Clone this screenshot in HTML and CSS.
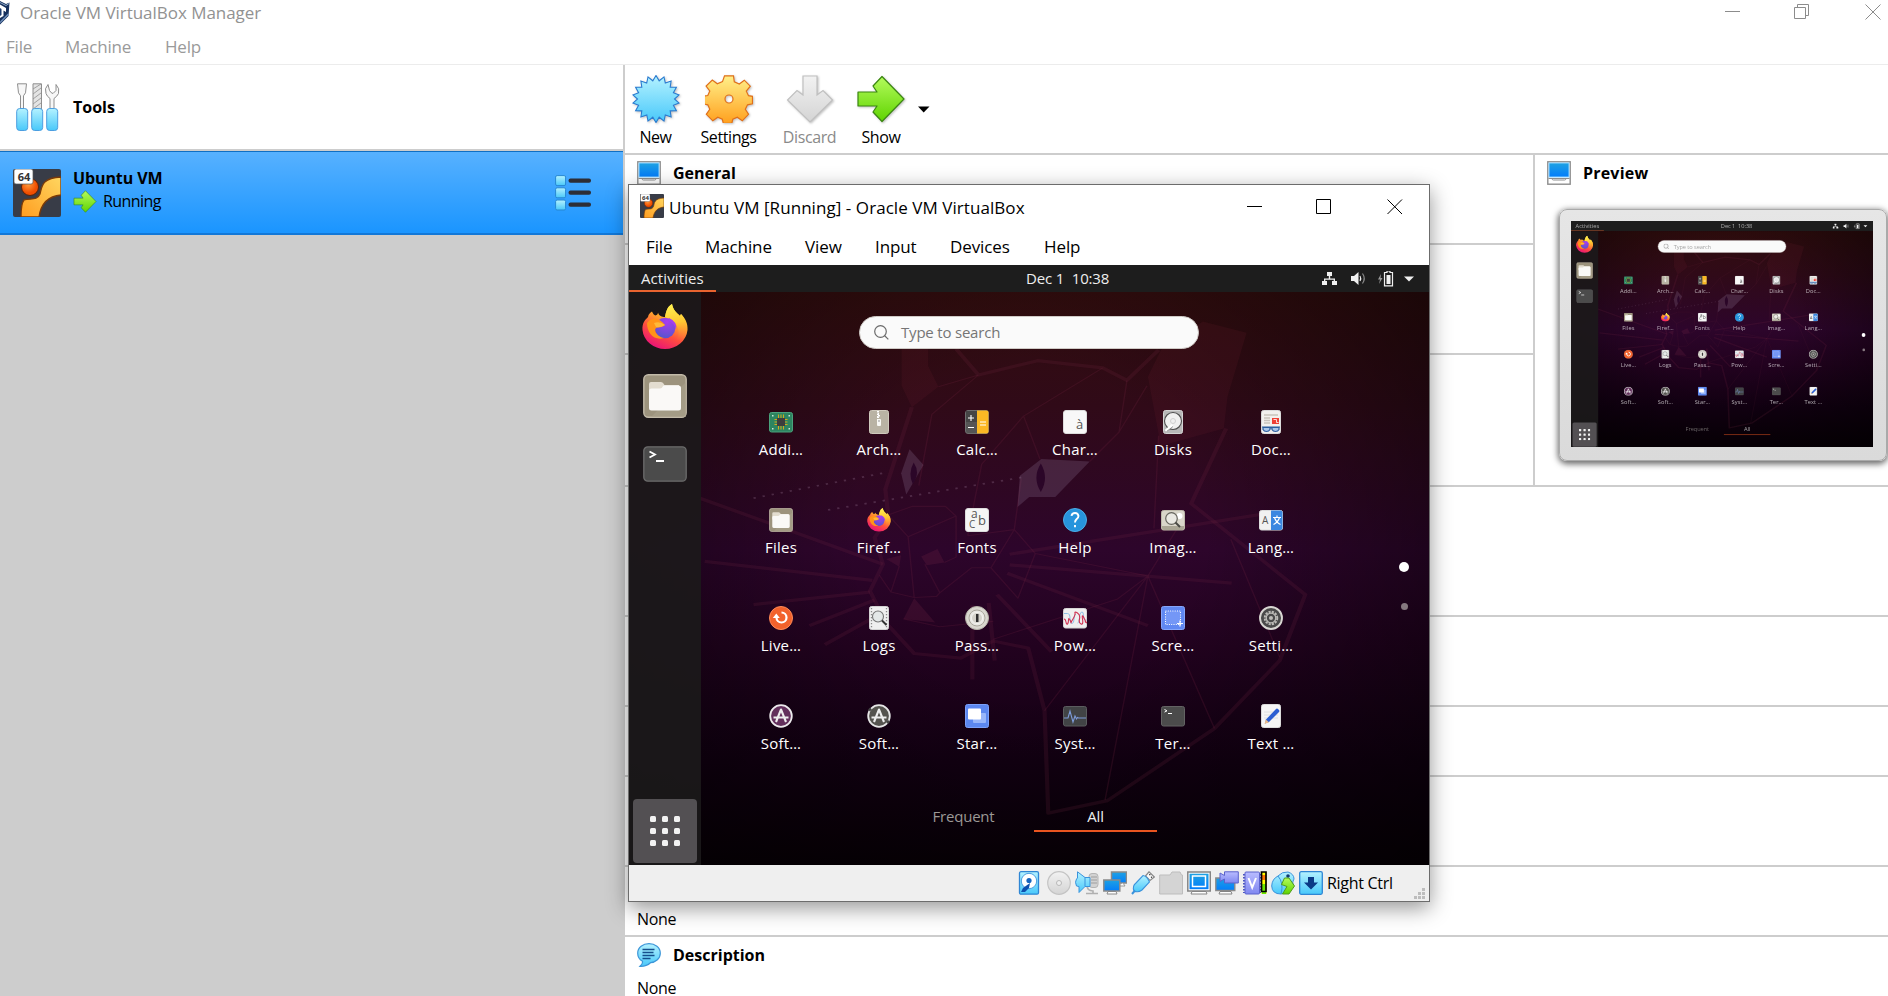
FILE: index.html
```html
<!DOCTYPE html>
<html lang="en">
<head>
<meta charset="utf-8">
<title>Oracle VM VirtualBox Manager</title>
<link rel="stylesheet" href="styles.css">
</head>
<body>
<svg class="defs" width="0" height="0" aria-hidden="true">
  <defs>
    <linearGradient id="cyan" x2="0" y2="1"><stop stop-color="#b4f2ff"/><stop offset="1" stop-color="#48c8fa"/></linearGradient>
    <linearGradient id="screenblue" x2="0" y2="1"><stop stop-color="#1fa2e2"/><stop offset="1" stop-color="#037dfb"/></linearGradient>
    <linearGradient id="gold" x2="0" y2="1"><stop stop-color="#fff08a"/><stop offset="1" stop-color="#ffa01e"/></linearGradient>
    <linearGradient id="green" x2="0" y2="1"><stop stop-color="#b4fb5c"/><stop offset="1" stop-color="#5fd400"/></linearGradient>
    <linearGradient id="silver" x2="0" y2="1"><stop stop-color="#f2f2f2"/><stop offset="1" stop-color="#d4d4d4"/></linearGradient>
    <linearGradient id="violet" x2="0" y2="1"><stop stop-color="#b9bcff"/><stop offset="1" stop-color="#8088f0"/></linearGradient>
    <linearGradient id="orangeband" x1="1" y1="0" x2="0" y2="1"><stop stop-color="#ffd660"/><stop offset="1" stop-color="#ff9d20"/></linearGradient>
    <radialGradient id="ball" cx=".4" cy=".35"><stop stop-color="#ff9a3c"/><stop offset="1" stop-color="#f04e00"/></radialGradient>
    <linearGradient id="ff" x1=".8" y1="0" x2=".3" y2="1"><stop stop-color="#fff44f"/><stop offset=".35" stop-color="#ffb02a"/><stop offset=".65" stop-color="#ff4f3d"/><stop offset="1" stop-color="#e8107a"/></linearGradient>
    <linearGradient id="fftail" x1=".5" y1="0" x2=".6" y2="1"><stop stop-color="#fff050"/><stop offset=".5" stop-color="#ffc832"/><stop offset="1" stop-color="#ff6a3a" stop-opacity="0"/></linearGradient>
    <radialGradient id="ffglobe" cx=".6" cy=".2" r=".9"><stop stop-color="#a83cf0"/><stop offset="1" stop-color="#4f57c8"/></radialGradient>

    <symbol id="i-vm" viewBox="0 0 48 48">
      <rect width="48" height="48" rx="2" fill="#383c47"/>
      <circle cx="17" cy="18" r="8.500" fill="url(#ball)" stroke="#5a2208"/>
      <path d="M8 48C8 41 8.500 34 11 31C18 29 24 32 27 25C29 18 28 9 48 8V26C36 27 28 34 26 48Z" fill="url(#orangeband)" stroke="#7a3a08" stroke-width="1.300"/>
      <rect x="1" y="0" width="19" height="15" rx="2" fill="#fff" stroke="#555" stroke-width=".7"/>
    </symbol>
    <symbol id="i-display" viewBox="0 0 24 24">
      <rect x=".8" y=".8" width="22.400" height="22.400" fill="#fff" stroke="#8d8d8d" stroke-width="1.400"/>
      <rect x="2" y="2" width="20" height="14" fill="url(#screenblue)" stroke="#8fd4ff" stroke-width="1"/>
      <path d="M1.500 17.500h21M5 17.500q0 1.500 1.500 1.500h11q1.500 0 1.500-1.500" fill="none" stroke="#8d8d8d" stroke-width="1"/>
    </symbol>
    <symbol id="i-arrow" viewBox="0 0 48 48">
      <path d="M1 17H20L16 11L25 1.500L47 24L25 46.500L16 37L20 31H1Z" fill="url(#green)" stroke="#3a8610" stroke-width="1.200" stroke-linejoin="round"/>
    </symbol>
    <symbol id="i-firefox" viewBox="0 0 46 46">
      <path d="M10 7.500C11 10 12 11 13.500 11.500C15 11 16 10 16 8.500C17 12 20 13 23 13C24 8 25 3 30 0C31 6 35 9 38 12L39 10C43 14 46 19 45.500 26A22.600 21 0 0 1 .5 26C0 19 3 16 6 13C6.500 10 8 9 10 7.500Z" fill="url(#ff)"/>
      <path d="M30 0C31 6 35 9 38 12L39 10C44 16 47 24 43 32C40 38 36 37 34 36C40 29 36 17 23 13C24 8 25 3 30 0Z" fill="url(#fftail)"/>
      <circle cx="23" cy="24" r="10.300" fill="url(#ffglobe)"/>
      <path d="M5 19C9 13 17 13 23 21C20 24 16 23 14 24C11 27 16 33 22 34C12 37 5 29 5 19Z" fill="#ff9418"/>
      <path d="M12 19q6-2 11 2q-5 3-9 2z" fill="#ffb938"/>
      <path d="M27 14q9 4 7 12q-1-6-7-9z" fill="#a23ff0"/>
    </symbol>
    <symbol id="i-files" viewBox="0 0 44 44">
      <rect x=".8" y=".8" width="42.400" height="42.400" rx="4.500" fill="#9c937d" stroke="#c2baa8" stroke-width="1.400"/>
      <path d="M43 8V43H8z" fill="#aaa18c" opacity=".6"/>
      <path d="M6 10q0-2 2-2h10q2 0 3.500 3H36v10H6z" fill="#e3ddd0"/>
      <path d="M6 17q0-2.500 2.500-2.500H17q2 0 3.500-3H35.500q2.500 0 2.500 2.500V34q0 2.500-2.500 2.500h-27Q6 36.500 6 34z" fill="#faf9f7"/>
    </symbol>
    <symbol id="i-terminal" viewBox="0 0 44 36">
      <rect x=".8" y=".8" width="42.400" height="34.400" rx="4" fill="#4b4b4b" stroke="#6b6b6b" stroke-width="1.300"/>
      <path d="M6.500 5.500l5.500 3-5.500 3M13 15h8" fill="none" stroke="#fff" stroke-width="1.800"/>
    </symbol>
  </defs>
</svg>

<div class="manager">
  <header class="titlebar">
    <svg class="app-logo" width="10" height="24" viewBox="0 0 10 24"><path d="M0 0L6 3L9.500 1.500L8.500 15L0 23.500Z" fill="#16305c"/><path d="M0 3.500L6 7V11L3.500 9.500V15L0 17Z" fill="#fff"/><path d="M0 7L1.500 8V14L0 15Z" fill="#1c3c70"/><path d="M0 1.500L6 4.500L9 2.500" fill="none" stroke="#8fa9c8"/><path d="M8.500 13L0 21.500" stroke="#7090bb" stroke-width="1.500"/></svg>
    <span class="titlebar-text">Oracle VM VirtualBox Manager</span>
    <svg class="controls-outer" width="156" height="16" viewBox="0 0 156 16" fill="none" stroke="#8c8c8c"><path d="M0 7.500h15M69.500 3.500h11v11h-11zM72.500 3V.5h11v11H81"/><path d="M140.500.5l15 15M155.500.5l-15 15"/></svg>
  </header>
  <nav class="menubar"><span class="m-file">File</span><span class="m-machine">Machine</span><span>Help</span></nav>

  <div class="body">
    <aside class="sidebar">
      <div class="tools-row">
        <svg class="tools-icon" width="44" height="48" viewBox="0 0 44 48" stroke="#8e8e8e" fill="#f7f7f7">
          <path d="M1.500.8h9l-1 9-2 3v13h-3v-13l-2-3z"/>
          <path d="M17 .8h8.500V26H17z" fill="#e4e4e4"/><path d="M17 6l8-5M17 11l8-6M17 16l8-6M17 21l8-6M17 26l8-6" stroke-width=".8"/>
          <path d="M32 1.500q-4 4-2 9 1 3 4 5V26h4V15.500q3-2 4.500-5 1.500-5-2.500-9v6l-3 3q-2-.3-3.500-3z"/>
          <g fill="url(#cyan)" stroke="#4c9ee0"><rect x=".7" y="25.500" width="11" height="22" rx="3"/><rect x="15.700" y="25.500" width="11" height="22" rx="3"/><rect x="30.700" y="25.500" width="11" height="22" rx="3"/></g>
        </svg>
        <b>Tools</b>
      </div>
      <div class="vm-row">
        <div class="vm-icon"><svg width="48" height="48"><use href="#i-vm"/></svg><span>64</span></div>
        <div class="vm-info">
          <b>Ubuntu VM</b>
          <div class="vm-state"><svg width="24" height="23"><use href="#i-arrow" width="24" height="23"/></svg><span>Running</span></div>
        </div>
        <svg class="vm-list" width="36" height="36" viewBox="0 0 36 36"><g fill="url(#cyan)" stroke="#2787d2"><rect x=".6" y=".6" width="10" height="10" rx="1.500"/><rect x=".6" y="12.800" width="10" height="10" rx="1.500"/><rect x=".6" y="25" width="10" height="10" rx="1.500"/></g><g fill="#2d2d35"><rect x="13.500" y="3.500" width="22.500" height="4.300" rx="2"/><rect x="13.500" y="15.500" width="22.500" height="4.300" rx="2"/><rect x="13.500" y="27.500" width="22.500" height="4.300" rx="2"/></g></svg>
      </div>
    </aside>

    <main class="details">
      <div class="toolbar">
        <div class="tool t-new">
          <svg width="48" height="48" viewBox="0 0 48 48"><path id="burst" fill="url(#cyan)" stroke="#2a7bd0" stroke-width="1.100" d=""/></svg>
          <span>New</span></div>
        <div class="tool t-settings">
          <svg width="48" height="48" viewBox="0 0 48 48"><path d="M19.500.8h9l.8 6 5 2.200 5-3.800 6 6-4 5 2.200 4.500 4 .600v7.500l-5 1-2.200 4.500 3.200 5-6.200 6.500-5-3.500-4.500 2-1 4h-8.500l-1-4-4.500-2-5 3.500-6.500-6.500 3.500-5-2-4.500-5-1v-7.500l5-.8 2-4.500-3.700-5 6.200-6 5 3.800 5.200-2.200zM24 20a4 4 0 1 0 0 8 4 4 0 0 0 0-8z" fill="url(#gold)" stroke="#e0701a" stroke-width="1.200" fill-rule="evenodd"/></svg>
          <span>Settings</span></div>
        <div class="tool t-discard">
          <svg width="48" height="48" viewBox="0 0 48 48"><path d="M17 1H31V20L37 15.500L46.500 25L24 47L1.500 25L11 15.500L17 20Z" fill="url(#silver)" stroke="#c0c0c0" stroke-width="1.200"/></svg>
          <span>Discard</span></div>
        <div class="tool t-show">
          <svg width="48" height="48"><use href="#i-arrow"/></svg>
          <span>Show</span></div>
        <svg class="caret" width="12" height="7" viewBox="0 0 12 7"><path d="M0 .5h11.500L5.700 6.500z"/></svg>
      </div>

      <div class="upper">
        <div class="upper-left">
          <section class="sec h90"><h2><svg width="24" height="24"><use href="#i-display"/></svg>General</h2></section>
          <section class="sec h110"></section>
          <section class="sec h132"></section>
        </div>
        <section class="preview">
          <h2><svg width="24" height="24"><use href="#i-display"/></svg>Preview</h2>
          <div class="monitor"><div class="monitor-screen" id="thumb"></div></div>
        </section>
      </div>
      <section class="sec h130"></section>
      <section class="sec h90"></section>
      <section class="sec h70"></section>
      <section class="sec h90"></section>
      <section class="sec h70 usb"><p>None</p></section>
      <section class="sec desc">
        <h2><svg width="24" height="24" viewBox="0 0 24 24"><path d="M12 .7C18 .7 23.300 4.500 23.300 10.200S18 19.500 13.500 19.700C11 22 7 23.500 3 23.300C5 21.500 5.800 20 5.500 18.300C2.500 16.500.7 13.800.7 10.200C.7 4.500 6 .7 12 .7Z" fill="url(#cyan)" stroke="#3c96d8" stroke-width="1.200"/><path d="M5.500 6.500h12M5.500 9.500h11M5.500 12.500h12M5.500 15.500h8" stroke="#154f8c" stroke-width="1.700"/></svg>Description</h2>
        <p>None</p>
      </section>
    </main>
  </div>
</div>

<div class="vmwin">
  <header class="win-title">
    <div class="vm-icon small"><svg width="24" height="24"><use href="#i-vm"/></svg><span>64</span></div>
    <span class="win-name">Ubuntu VM [Running] - Oracle VM VirtualBox</span>
    <svg class="controls-inner" width="156" height="16" viewBox="0 0 156 16" fill="none" stroke="#000"><path d="M0 7.500h15M69.500.5h14v14h-14z"/><path d="M140.500.5l14.500 14.500M155 .5l-14.500 14.500"/></svg>
  </header>
  <nav class="win-menu"><span class="w1">File</span><span class="w2">Machine</span><span class="w3">View</span><span class="w4">Input</span><span class="w5">Devices</span><span>Help</span></nav>

  <div class="guest" id="guest">
    <div class="topbar">
      <span class="activities">Activities</span>
      <span class="clock">Dec 1&nbsp; 10:38</span>
      <svg class="tray" width="94" height="16" viewBox="0 0 94 16" fill="#f0f0f0">
        <path d="M5 1h5v4H8.200v2.500H13v2.500h2v4h-5v-4h1.700V8.800H3.300V10H5v4H0v-4h2V7.500h4.800V5H5z"/>
        <path d="M29 5h3l4.500-4v13L32 10h-3z"/><path d="M38 5q1.500 2.500 0 5" fill="none" stroke="#f0f0f0" stroke-width="1.100"/><path d="M40.500 2.500q3.500 5 0 10" fill="none" stroke="#8a8a8a" stroke-width="1.200"/>
        <path d="M59 3l-3 5.500h2l-1 4.500 3.500-6h-2z" fill="#9a9a9a"/><path d="M63 1.500h2V0h3v1.500h2.500v13.300H62.500V1.500z" fill="none" stroke="#f0f0f0" stroke-width="1.200"/><path d="M64.500 4h4v9h-4z"/>
        <path d="M82 5.500h10l-5 5z"/>
      </svg>
    </div>
    <div class="shell">
      <svg class="wall" width="800" height="573" viewBox="0 27 800 573">
        <g transform="translate(71 35) scale(.4656 .3571)" fill="none" stroke-linejoin="round">
          <g stroke="#7c2848" stroke-opacity=".17" stroke-width="9">
            <path d="M455 300L398 530L405 610L375 665L393 740L365 815L400 905L460 990L560 1003L630 955L705 975L740 1150L748 1437L875 1402L1105 1200L1245 1010L1300 825L1055 570L1130 360"/>
            <path d="M550 137L598 210L725 170L865 190L917 225L985 140"/>
            <path d="M0 555L393 740M10 732L370 785M115 853L365 818M235 912L375 840M268 965L400 870M665 712L1230 595M665 742L1142 793M660 765L962 912M638 825L755 985M620 848L633 1010M585 855V1063"/>
          </g>
          <g stroke="#7c2848" stroke-opacity=".2" stroke-width="3">
            <path d="M598 210L512 243M598 210L498 320L470 520M865 190L695 325L730 445M695 325L605 460L575 660M917 225L900 370L837 452M960 240L900 370M985 380L975 640M398 605L455 578H527L550 605M410 610L447 663L460 833M447 663L550 605M575 660L675 643L690 500M675 643L625 750L683 835L720 710L675 643M625 750H583L515 820L483 740M515 820L508 830L460 833L410 818L428 745M385 770L410 818M720 710L962 773L897 837L630 950M962 773L740 1150M962 773L870 1400M962 773L1105 1200M1025 640L962 773M1140 670L1245 1000M437 893L515 915L630 900M525 735L550 720V605"/>
          </g>
          <g fill="#802838" fill-opacity=".12"><path d="M433 100H490V185L512 243L455 300L433 240Z"/><path d="M990 140L1080 60L1174 92L1133 270L1125 360L985 410V375L962 215Z"/></g>
          <g fill="#7c2848" fill-opacity=".22"><path d="M460 835L505 903L437 893Z"/><path d="M475 718L510 697L525 735L487 743ZM400 725L432 715L428 747Z"/></g>
          <g fill="#8a6e90" fill-opacity=".27"><path d="M450 418L480 462L443 545L432 485Z"/><path d="M733 445L837 452L763 552H707L682 580L687 492Z"/></g>
          <path d="M459 455Q474 485 457 515Q446 485 459 455ZM732 458Q750 498 732 538Q713 498 732 458Z" fill="#2b0628"/>
          <path d="M115 555L400 483M275 588L690 497" stroke="#9a7a98" stroke-opacity=".3" stroke-width="5" stroke-dasharray="5 15"/>
        </g>
      </svg>
      <div class="dock">
        <svg width="46" height="46"><use href="#i-firefox"/></svg>
        <svg class="d-files" width="44" height="44"><use href="#i-files"/></svg>
        <svg class="d-term" width="44" height="36"><use href="#i-terminal"/></svg>
        <div class="apps-btn"><svg width="30" height="30" viewBox="0 0 30 30" fill="#f2f2f2"><rect width="6" height="6" rx="1.500"/><rect x="12" width="6" height="6" rx="1.500"/><rect x="24" width="6" height="6" rx="1.500"/><rect y="12" width="6" height="6" rx="1.500"/><rect x="12" y="12" width="6" height="6" rx="1.500"/><rect x="24" y="12" width="6" height="6" rx="1.500"/><rect y="24" width="6" height="6" rx="1.500"/><rect x="12" y="24" width="6" height="6" rx="1.500"/><rect x="24" y="24" width="6" height="6" rx="1.500"/></svg></div>
      </div>
      <div class="overview">
        <div class="search"><svg width="15" height="15" viewBox="0 0 15 15" fill="none" stroke="#6a6a6a" stroke-width="1.200"><circle cx="6.500" cy="6.500" r="5.800"/><path d="M10.500 10.500l3.800 3.800"/></svg><span>Type to search</span></div>
        <div class="grid">
          <div class="app"><svg viewBox="0 0 24 24"><rect x=".5" y="2.500" width="23" height="19.500" rx="2" fill="#2d8560" stroke="#4aa27c"/><path d="M9.500 4.500v15M12 4.500v15M14.500 4.500v15M5.500 9.500h13M5.500 12h13M5.500 14.500h13" stroke="#d4a61c" stroke-width="1"/><rect x="8" y="8" width="8" height="8" fill="#3d3d3d"/><path d="M3 5h1.500v1.500H3zM19.500 5H21v1.500h-1.500zM3 18h1.500v1.500H3zM19.500 18H21v1.500h-1.500z" fill="#c9e8da"/></svg><span>Addi…</span></div>
          <div class="app"><svg viewBox="0 0 24 24"><rect x="2.500" y=".5" width="19" height="23" rx="2" fill="#b9b3a4" stroke="#cfcabd"/><path d="M11 1v3h1v3h-1v3" stroke="#fff" stroke-width="2" stroke-dasharray="1.500 1" fill="none"/><rect x="10" y="9" width="4" height="7" rx="1" fill="#f8f8f4"/><path d="M11 11h2" stroke="#999"/></svg><span>Arch…</span></div>
          <div class="app"><svg viewBox="0 0 24 24"><rect x=".5" y=".5" width="23" height="23" rx="2.500" fill="#555" stroke="#6e6e6e"/><path d="M1 1h11v11H1z" fill="#454545"/><path d="M12 .5h9.500q2 0 2 2v19q0 2-2 2H12z" fill="#fbb824"/><path d="M3 8h6M6 5v6M3 17.500h6M15 12h6M15 15h6" stroke="#fff" stroke-width="1.100"/></svg><span>Calc…</span></div>
          <div class="app"><svg viewBox="0 0 24 24"><rect x=".5" y=".5" width="23" height="23" rx="2.500" fill="#f8f8f8" stroke="#dcdcdc"/></svg><i class="glyph g-char">à</i><span>Char…</span></div>
          <div class="app"><svg viewBox="0 0 24 24"><rect x="2.500" y=".5" width="19" height="23" rx="2" fill="#b8b8b8" stroke="#d4d4d4"/><circle cx="12" cy="11" r="8.500" fill="#f0f0f0" stroke="#4c4c4c" stroke-width="1.100"/><circle cx="12" cy="11" r="2.500" fill="none" stroke="#d0d0d0"/><path d="M4.500 21l7-6" stroke="#fff" stroke-width="2.500"/><path d="M5.500 21.500l6.500-5" stroke="#777" stroke-width=".7"/></svg><span>Disks</span></div>
          <div class="app"><svg viewBox="0 0 24 24"><rect x="2.500" y=".5" width="19" height="23" rx="2" fill="#f2f0ee" stroke="#dadada"/><path d="M5 5h14M5 8h6M5 10.500h6M5 13h6" stroke="#c9c3bc" stroke-width="1.300"/><path d="M13 8h7v6h-7z" fill="#ee4035"/><path d="M14.500 9.500h3v3h2" stroke="#fff" fill="none" stroke-width=".8"/><path d="M4 17.500h7v2q-1 2-3.500 2T4 19.500zM13 17.500h7v2q-1 2-3.500 2T13 19.500zM11 18h2M3 17h18" fill="#a9c6ea" stroke="#2d5f9e" stroke-width="1.200"/></svg><span>Doc…</span></div>

          <div class="app"><svg><use href="#i-files" width="24" height="24"/></svg><span>Files</span></div>
          <div class="app"><svg><use href="#i-firefox" width="24" height="24"/></svg><span>Firef…</span></div>
          <div class="app"><svg viewBox="0 0 24 24"><rect x=".5" y=".5" width="23" height="23" rx="2.500" fill="#f5f5f5" stroke="#dcdcdc"/></svg><i class="glyph g-fa">a</i><i class="glyph g-fb">b</i><i class="glyph g-fc">C</i><span>Fonts</span></div>
          <div class="app"><svg viewBox="0 0 24 24"><circle cx="12" cy="12" r="11.500" fill="#2794dc" stroke="#4aaee8"/><path d="M8.500 7.800q.5-2.800 3.500-2.800t3.500 3q0 1.700-2 3.200-1.500 1.300-1.500 3.300M12 17v2.200" fill="none" stroke="#fff" stroke-width="1.900"/></svg><span>Help</span></div>
          <div class="app"><svg viewBox="0 0 24 24"><rect x=".5" y="2.500" width="23" height="19.500" rx="2" fill="#d9d6ca" stroke="#bdb9aa"/><path d="M1 18h22v2q0 2-2 2H3q-2 0-2-2z" fill="#aaa695"/><circle cx="18.500" cy="8" r="3" fill="#fff"/><circle cx="10.500" cy="10.500" r="5.800" fill="#e9e8e2" stroke="#66655e" stroke-width="1.200"/><path d="M14.500 14.500l4.500 4.500" stroke="#4a4a45" stroke-width="1.900"/></svg><span>Imag…</span></div>
          <div class="app"><svg viewBox="0 0 24 24"><rect x=".5" y="2.500" width="23" height="19.500" rx="2" fill="#f1f1f1" stroke="#ddd"/><path d="M12 2.500h9.500q2 0 2 2v15.500q0 2-2 2H12z" fill="#3a87e0"/><path d="M14 9.500h8M18 7.500v2M15.500 9.500q1.500 5 6 7M20.500 9.500q-1.500 5-6 7" stroke="#fff" fill="none" stroke-width="1.200"/></svg><i class="glyph g-lang">A</i><span>Lang…</span></div>

          <div class="app"><svg viewBox="0 0 24 24"><circle cx="12" cy="12" r="11.500" fill="#f2622c" stroke="#ff8a58"/><path d="M7.500 11.500a5 5 0 1 0 5-5" fill="none" stroke="#fff" stroke-width="2.200"/><path d="M3.800 12h7L7.300 7.500z" fill="#fff"/></svg><span>Live…</span></div>
          <div class="app"><svg viewBox="0 0 24 24"><rect x="2.500" y=".5" width="19" height="23" rx="2" fill="#efefef" stroke="#d2d2d2"/><path d="M4.500 2v20M19.500 2v20" stroke="#8a8a8a" stroke-width="1.300" stroke-dasharray="1.300 1.700"/><circle cx="11" cy="10.500" r="5.500" fill="#e4e8e8" stroke="#777" stroke-width="1.100"/><path d="M15 14.500l4.500 4.500" stroke="#333" stroke-width="1.900"/></svg><span>Logs</span></div>
          <div class="app"><svg viewBox="0 0 24 24"><circle cx="12" cy="12" r="11.500" fill="#d9d7cf" stroke="#b5b2a8"/><circle cx="12" cy="12" r="8" fill="#e9e8e3" stroke="#aaa79c"/><circle cx="12" cy="12" r="5.500" fill="#d4d2ca" stroke="#f5f5f2"/><path d="M11 8h2.500v8H11z" fill="#2e2e2e"/></svg><span>Pass…</span></div>
          <div class="app"><svg viewBox="0 0 24 24"><rect x=".5" y="2.500" width="23" height="19.500" rx="2" fill="#efefef" stroke="#d5d5d5"/><path d="M1 7.500h3.500q2.500 0 2.500 5t2 5 2-4.500 2-5M14.500 17q2 0 2-5t2-6 2 4 3 4" fill="none" stroke="#8fc0e6"/><path d="M1 13q1.500 0 2 3t1.500 2 1-4 1.500 0 1 3 2-4 2-6 2.500 0 2 6 1.500 5 1.500-5 1.500-1 1.500 4 1.500 1" fill="none" stroke="#d03050" stroke-width="1.100"/></svg><span>Pow…</span></div>
          <div class="app"><svg viewBox="0 0 24 24"><rect x=".5" y=".5" width="23" height="23" rx="2" fill="#6088f2" stroke="#84a5fa"/><rect x="4.500" y="5" width="15" height="13.500" fill="#7497f6" stroke="#fff" stroke-width="1.100" stroke-dasharray="1 1.300"/><path d="M19 14.500v6M16 17.500h6" stroke="#fff" stroke-width="1.200"/></svg><span>Scre…</span></div>
          <div class="app"><svg viewBox="0 0 24 24"><circle cx="12" cy="12" r="11" fill="#4a4a4a" stroke="#d8d6d2" stroke-width="1.900"/><circle cx="12" cy="12" r="6.300" fill="none" stroke="#bdbcb8" stroke-width="1.900" stroke-dasharray="2.200 1.100"/><circle cx="12" cy="12" r="4.800" fill="none" stroke="#bdbcb8" stroke-width="1.300"/><circle cx="12" cy="12" r="2" fill="#bdbcb8"/></svg><span>Setti…</span></div>

          <div class="app"><svg viewBox="0 0 24 24"><circle cx="12" cy="12" r="10.800" fill="#63305c" stroke="#eceaec" stroke-width="1.800"/><path d="M7 18L12 5.500L17 18M4.500 13.500h15" fill="none" stroke="#eee" stroke-width="2.100" stroke-linejoin="round"/></svg><span>Soft…</span></div>
          <div class="app"><svg viewBox="0 0 24 24"><circle cx="12" cy="12" r="10.800" fill="#55544f" stroke="#e6e6e6" stroke-width="1.800"/><path d="M7 18L12 5.500L17 18M4.500 13.500h15" fill="none" stroke="#eee" stroke-width="2.100" stroke-linejoin="round"/><path d="M2 6.500l2-2M20 19l2-2" stroke="#444" stroke-width="2.500"/></svg><span>Soft…</span></div>
          <div class="app"><svg viewBox="0 0 24 24"><rect x=".5" y=".5" width="23" height="23" rx="2" fill="#5c88f0" stroke="#7ba1fa"/><rect x="8" y="9" width="13" height="10" rx="1" fill="#98b6fa"/><rect x="3" y="4.500" width="13" height="11" rx="1" fill="#fff"/></svg><span>Star…</span></div>
          <div class="app"><svg viewBox="0 0 24 24"><rect x=".5" y="2.500" width="23" height="19.500" rx="2" fill="#414345" stroke="#5b5d5f"/><path d="M1 14h4l2-7 3 11 2-6 1.500 3 1-1.500 1 .500H23" fill="none" stroke="#7d9ad8" stroke-width="1.100"/></svg><span>Syst…</span></div>
          <div class="app"><svg viewBox="0 0 24 24"><rect x=".5" y="2.500" width="23" height="19.500" rx="2" fill="#4b4b4b" stroke="#636363"/><path d="M3.500 5.500l2.500 1.300-2.500 1.300M7 9.500h4" fill="none" stroke="#fff"/></svg><span>Ter…</span></div>
          <div class="app"><svg viewBox="0 0 24 24"><rect x="2.500" y=".5" width="19" height="23" rx="2" fill="#f5f5f5" stroke="#dadada"/><path d="M5 8h14M5 11h14M5 14h14" stroke="#e0e0e0"/><path d="M6 19.500l1-4 10-10.500q1-1 2.500.500t.500 2.500L10 18z" fill="#2c5fd2"/><path d="M5.500 20l1.300-4.500 3.200 2.700z" fill="#e9b98a"/></svg><span>Text …</span></div>
        </div>
        <div class="tabs"><span class="tab">Frequent</span><span class="tab active">All</span></div>
        <div class="pages"><i class="on"></i><i></i></div>
      </div>
    </div>
  </div>

  <footer class="status">
    <svg class="hdd" viewBox="0 0 24 24"><rect x="2.500" y=".7" width="19" height="22.500" rx="1.500" fill="url(#cyan)" stroke="#2f86d4" stroke-width="1.300"/><circle cx="12" cy="10" r="7.700" fill="#fff" stroke="#4a9ee0"/><circle cx="12" cy="9.500" r="2.600" fill="#1765c0"/><path d="M4 21l2-4 7-5-1 5-4 4z" fill="#0d4fae"/></svg>
    <svg viewBox="0 0 24 24"><circle cx="12" cy="12" r="11.300" fill="url(#silver)" stroke="#c4c4c4" stroke-width="1.200"/><circle cx="12" cy="12" r="2.500" fill="#eee" stroke="#b8b8b8"/></svg>
    <svg viewBox="0 0 24 24"><rect x="14" y="2.500" width="9" height="14" rx="3" fill="#d2d2d2" stroke="#b4b4b4"/><path d="M16 6h6M16 9h6M16 12h6M12 14q0 6 6 6v3M11 22.500h12" fill="none" stroke="#b0b0b0" stroke-width="1.600"/><path d="M1.500 8Q-.5 11 1.500 15L4 15.500V21.500L10 15.500H15V6.500H10L2.500 .8V7Z" fill="url(#cyan)" stroke="#3a93dc"/><path d="M10 6.500v9" stroke="#3a93dc"/></svg>
    <svg viewBox="0 0 24 24"><path d="M8.500 1h15v11h-15z" fill="url(#screenblue)" stroke="#8a8a8a" stroke-width="1.500"/><path d="M17 15h5l-2-3" fill="#fff" stroke="#999"/><path d="M.8 9h16v11H.8z" fill="url(#screenblue)" stroke="#8a8a8a" stroke-width="1.500"/><path d="M4 23h10l-1-2.500H5z" fill="#fff" stroke="#8a8a8a"/></svg>
    <svg viewBox="0 0 24 24"><path d="M14.500 5L18 .8L23.300 6L19 9.500Z" fill="#fafafa" stroke="#888" stroke-width="1.200"/><path d="M18 3.700h1.500M20.500 5.500v1.500" stroke="#555" stroke-width="1.200"/><path d="M3 20Q1 15 5 12L12 4.500Q16 5 18.500 11L11 19Q7 22 3 20Z" fill="url(#cyan)" stroke="#3a93dc" stroke-width="1.100"/><path d="M4 19.500L1 23" stroke="#3a93dc" stroke-width="2"/></svg>
    <svg viewBox="0 0 24 24"><path d="M.7 23V4H11L13 1h8l1.500 3h1V23Z" fill="#d4d4d4" stroke="#bdbdbd"/></svg>
    <svg viewBox="0 0 24 24"><path d="M.8 1h22.500v19H.8z" fill="#fff" stroke="#858585" stroke-width="1.500"/><path d="M2.500 2.700h19v15.500h-19z" fill="url(#screenblue)"/><path d="M5.500 5h13v10.500h-13z" fill="none" stroke="#fff" stroke-width="1.500"/><path d="M4 23h16l-1-2.500H5z" fill="#fff" stroke="#858585"/></svg>
    <svg viewBox="0 0 24 24"><path d="M.8 7h19v12.500H.8z" fill="url(#screenblue)" stroke="#8a8a8a" stroke-width="1.400"/><path d="M4 23h13l-1-2.500H5z" fill="#fff" stroke="#858585"/><path d="M9.500.8H23.300V12H9.500V8L5 10.500V2L9.500 4.500Z" fill="url(#violet)" stroke="#5a62cc"/></svg>
    <svg viewBox="0 0 24 24"><path d="M1.500 3v19M16.500 3v19" stroke="#4c55c0" stroke-width="3" stroke-dasharray="1.500 1.500"/><rect x="2" y="1" width="14.500" height="22" rx="1" fill="url(#violet)" stroke="#5a62cc"/><path d="M5.500 7l3.700 9.500L13 7" fill="none" stroke="#fff" stroke-width="2"/><path d="M18.500 1h5v22h-5z" fill="#ff0"/><path d="M19 13h4v10h-4z" fill="#6be800"/><path d="M19 4h4v5h-4z" fill="#ff7800"/><path d="M18.500 1h4.500v19.500h-4.500z" fill="none" stroke="#000" stroke-width="1.700"/></svg>
    <svg viewBox="0 0 24 24"><path d="M7 5Q11 .5 17 1Q23 3 23 8Q21 11 22 14Q18 22 10 23Q1 23 .7 15Q1 8 7 5Z" fill="url(#cyan)" stroke="#3a93dc"/><path d="M7 5Q13 12 10 23" fill="none" stroke="#3a93dc"/><circle cx="17" cy="5" r="1.800" fill="#103a70"/><path d="M13.500 7H18L23.500 15L18 23H11.500L16 15.500L10.500 13.500Z" fill="url(#green)" stroke="#4f9c1a"/></svg>
    <svg viewBox="0 0 24 24"><rect x=".7" y=".7" width="22.600" height="22.600" rx="1.500" fill="url(#cyan)" stroke="#2f86d4" stroke-width="1.300"/><path d="M9 6h6v5.500h4L12 18.500 5 11.500h4z" fill="#0b3a86"/></svg>
    <span class="hostkey">Right Ctrl</span>
    <svg class="grip" width="12" height="12" viewBox="0 0 12 12" fill="#bdbdbd"><path d="M8 0h3v3H8zM4 4h3v3H4zM8 4h3v3H8zM0 8h3v3H0zM4 8h3v3H4zM8 8h3v3H8z"/></svg>
  </footer>
</div>
<script src="script.js"></script>
</body>
</html>
```
FILE: styles.css
```css
* { box-sizing: border-box; }
body { margin: 0; width: 1888px; height: 996px; overflow: hidden; background: #fff; color: #000; font: 16px/20px "Open Sans", "Noto Sans", sans-serif; }
svg { display: block; flex: none; }
svg.defs { position: absolute; }
h2, p { margin: 0; }
span, b { white-space: nowrap; }

.manager { height: 996px; display: flex; flex-direction: column; }
.titlebar { height: 26px; display: flex; align-items: center; color: #929292; font-size: 17px; letter-spacing: -.04px; }
.app-logo { margin-right: 10px; }
.titlebar-text { flex: 1; }
.controls-outer { margin: -3px 7px 0 0; }
.menubar { height: 39px; padding: 9px 6px 0; border-bottom: 1px solid #ececec; display: flex; line-height: 24px; color: #9a9a9a; font-size: 17px; letter-spacing: -.2px; }
.m-file { width: 59px; }
.m-machine { width: 100px; }

.body { flex: 1; display: flex; min-height: 0; }
.sidebar { width: 625px; background: #cdcdcd; border-right: 2px solid #cdcdcd; letter-spacing: -.4px; }
.tools-row { height: 84px; background: #fff; display: flex; align-items: center; padding-left: 16px; }
.tools-icon { margin-right: 13px; }
.tools-row b { letter-spacing: 0; }
.vm-row { height: 84px; margin-top: 2px; background: linear-gradient(#57b1ff, #1a95ff); border-top: 1px solid #0f6fc4; border-bottom: 2px solid #1278d8; display: flex; align-items: center; padding: 0 32px 0 13px; }
.vm-icon { position: relative; width: 48px; margin-right: 12px; }
.vm-icon span { position: absolute; left: 2px; top: 1px; width: 18px; text-align: center; font: bold 11px/14px "Open Sans", sans-serif; color: #333; letter-spacing: 0; }
.vm-info { flex: 1; }
.vm-info b { display: block; line-height: 20px; margin-top: -3px; letter-spacing: -.1px; }
.vm-state { display: flex; align-items: center; gap: 6px; height: 26px; }
.vm-state span { letter-spacing: -.55px; }

.details { flex: 1; min-width: 0; }
.toolbar { height: 88px; display: flex; }
.tool { display: flex; flex-direction: column; align-items: center; padding-top: 10px; letter-spacing: -.4px; }
.tool svg { filter: drop-shadow(1px 1px 1px rgba(0,0,0,.25)); }
.tool span { margin-top: 4px; }
.t-new { width: 61px; }
.t-settings { width: 85px; }
.t-discard { width: 77px; color: #8a8a8a; }
.t-show { width: 66px; }
.caret { margin: 41px 0 0 4px; }
.upper { display: flex; }
.upper-left { width: 908px; }
.sec { border-top: 2px solid #cdcdcd; }
.h70 { height: 70px; } .h90 { height: 90px; } .h110 { height: 110px; } .h130 { height: 130px; } .h132 { height: 132px; }
h2 { display: flex; gap: 12px; height: 36px; align-items: center; padding-left: 12px; font-size: 16px; letter-spacing: 0; }
p { padding-left: 12px; letter-spacing: -.35px; }
.usb p { padding-top: 42px; }
.desc { height: 61px; }
.desc p { padding-top: 7px; line-height: 16px; }
.preview { flex: 1; border-top: 2px solid #cdcdcd; border-left: 2px solid #cdcdcd; }
.preview h2 { letter-spacing: .2px; }
.monitor { width: 328px; height: 252px; margin: 18px 0 0 24px; padding: 11px; border: 1px solid #aaa; border-radius: 8px; background: linear-gradient(#e6e6e6, #dadada); box-shadow: 0 2px 6px 1px rgba(0,0,0,.6); }
.monitor-screen { width: 302px; height: 226px; overflow: hidden; background: #000; }
.monitor-screen .guest { transform: scale(.3775); transform-origin: 0 0; }
.monitor-screen span { opacity: .65; }

.vmwin { position: absolute; left: 628px; top: 184px; width: 802px; height: 718px; border: 1px solid #6c6c6c; background: #fff; box-shadow: 0 6px 20px rgba(0,0,0,.42); }
.win-title { height: 44px; display: flex; align-items: center; padding: 0 26px 0 11px; font-size: 17px; letter-spacing: .06px; }
.vm-icon.small { width: 24px; margin: -2px 5px 0 0; }
.vm-icon.small span { left: 1px; top: 0; width: 9px; font-size: 6px; line-height: 8px; }
.win-name { flex: 1; padding-top: 1px; }
.controls-inner { margin-top: -1px; }
.win-menu { height: 36px; display: flex; padding: 6px 17px 0; line-height: 24px; font-size: 17px; letter-spacing: -.1px; }
.w1 { width: 59px; } .w2 { width: 100px; } .w3 { width: 70px; } .w4 { width: 75px; } .w5 { width: 94px; }

.guest { width: 800px; height: 600px; display: flex; flex-direction: column; color: #fff; font-size: 15px; background: #140010; overflow: hidden; }
.topbar { height: 27px; background: #1d1d1d; display: flex; color: #eee; line-height: 26px; }
.activities { width: 87px; height: 27px; padding-left: 12px; border-bottom: 2px solid #e9632f; letter-spacing: .1px; }
.clock { width: 606px; padding-left: 310px; letter-spacing: -.15px; }
.tray { margin: 6px 0 0; }
.shell { flex: 1; position: relative; display: flex; background: radial-gradient(ellipse 62% 80% at 50% 42%, transparent 35%, rgba(0,0,0,.6) 115%), linear-gradient(#320d0e 0%, #300a18 20%, #2d052b 45%, #22021f 62%, #120012 82%, #080006 100%); }
.wall { position: absolute; left: 0; top: 0; }
.dock { position: relative; width: 72px; background: rgba(28,26,27,.9); display: flex; flex-direction: column; align-items: center; padding: 12px 0 2px; }
.d-files { margin-top: 24px; }
.d-term { margin-top: 28px; }
.apps-btn { margin-top: auto; width: 64px; height: 64px; border-radius: 4px; background: #535053; display: grid; place-items: center; }
.overview { position: relative; flex: 1; display: flex; flex-direction: column; }
.search { margin: 24px 0 0 158px; width: 340px; height: 33px; border-radius: 17px; background: #fafafa; border: 1px solid #cfcac6; display: flex; align-items: center; gap: 12px; padding: 0 0 1px 14px; color: #757575; letter-spacing: -.2px; }
.grid { margin: 61px 0 0 31px; display: grid; grid-template-columns: repeat(6, 98px); grid-auto-rows: 98px; }
.app { position: relative; display: flex; flex-direction: column; align-items: center; }
.app svg { width: 24px; height: 24px; }
.app span { margin-top: 5px; line-height: 20px; letter-spacing: .25px; }
.glyph { position: absolute; font: 13px/14px "Open Sans", sans-serif; color: #555; }
.g-char { left: 50px; top: 7px; }
.g-fa { left: 43px; top: 0; font-size: 12px; line-height: 11px; }
.g-fb { left: 50px; top: 5px; }
.g-fc { left: 41px; top: 11px; font-size: 10px; line-height: 11px; }
.g-lang { left: 40px; top: 5px; font-size: 10px; }
.tabs { display: flex; gap: 9px; margin-left: 201px; }
.tab { width: 123px; height: 30px; text-align: center; line-height: 29px; color: #9c9996; letter-spacing: -.2px; border-bottom: 2px solid transparent; }
.tab.active { color: #eee; border-color: #e95420; }
.pages { position: absolute; left: 698px; top: 270px; display: flex; flex-direction: column; align-items: center; gap: 31px; }
.pages i { width: 7px; height: 7px; border-radius: 50%; background: #85787f; }
.pages .on { width: 10px; height: 10px; background: #fff; }

.status { height: 36px; background: #efefef; display: flex; align-items: center; gap: 4px; padding-left: 388px; }
.status svg { width: 24px; height: 24px; }
.status .hdd { margin-right: 2px; }
.hostkey { flex: 1; letter-spacing: -.3px; }
.status .grip { width: 12px; height: 12px; align-self: flex-end; margin: 0 3px 1px 0; }
```
FILE: script.js
```js
// Starburst outline for the "New" button.
const points = [];
for (let i = 0; i < 36; i++) {
  const r = i % 2 ? 18.500 : 23.500;
  const a = (i * 10 - 90) * Math.PI / 180;
  points.push((24 + r * Math.cos(a)).toFixed(1) + ' ' + (24 + r * Math.sin(a)).toFixed(1));
}
document.getElementById('burst').setAttribute('d', 'M' + points.join('L') + 'Z');

// The preview pane shows a scaled copy of the guest screen.
const copy = document.getElementById('guest').cloneNode(true);
copy.removeAttribute('id');
document.getElementById('thumb').appendChild(copy);
```
